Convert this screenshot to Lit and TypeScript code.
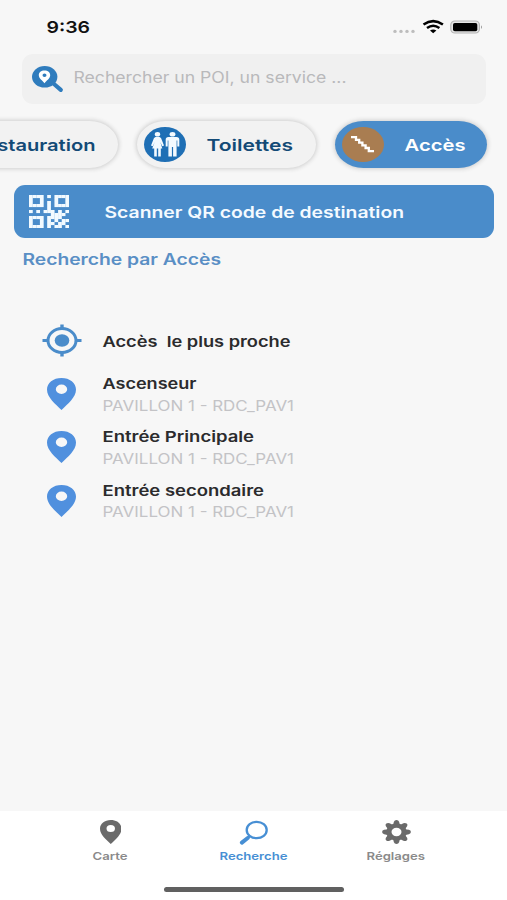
import { LitElement, html, css, svg } from "lit";
import { customElement } from "lit/decorators.js";

const label = (text: string, width: number, size: number, cls = "", baseline = 15) => html`
  <svg class="label ${cls}" width=${width} height="20" viewBox="0 0 ${width} 20">
    <text x="-0.5" y=${baseline} font-size=${size} textLength=${width} lengthAdjust="spacingAndGlyphs">${text}</text>
  </svg>`;

const pin = (w: number, h: number) => html`
  <svg width=${w} height=${h} viewBox="0 0 28 32" preserveAspectRatio="none">
    <path fill="currentColor" fill-rule="evenodd"
      d="M14 0C6 0 0 4.8 0 11.6C0 19.500 8 26 14 32C20 26 28 19.500 28 11.600C28 4.800 22 0 14 0ZM14 6.500A5.500 4.700 0 1 1 14 15.900A5.500 4.700 0 1 1 14 6.500Z"/>
  </svg>`;

const QR = [
  "11110101111",
  "10010001001",
  "10010101001",
  "11110101111",
  "00000100000",
  "10101110101",
  "00000011110",
  "11110111100",
  "10010101011",
  "10010110110",
  "11110101101",
];

const qrIcon = html`
  <svg class="qr" width="40" height="33" viewBox="0 0 11 11" preserveAspectRatio="none">
    ${QR.flatMap((row, y) => [...row].map((c, x) =>
      c === "1" ? svg`<rect x=${x} y=${y} width="1.03" height="1.03" fill="#f2faff"/>` : null))}
  </svg>`;

const searchPin = html`
  <svg width="32" height="27" viewBox="0 0 32 27">
    <path d="M22 18L28.800 23.800" stroke="#2f7cbd" stroke-width="4.200" stroke-linecap="round"/>
    <ellipse cx="12.700" cy="10.800" rx="12.700" ry="10.800" fill="#2f7cbd"/>
    <path fill="#fff" fill-rule="evenodd" d="M12.500 4.500C9 4.500 6.800 6.500 6.800 9.200C6.800 12.300 10.500 14.500 12.500 17.300C14.500 14.500 18.200 12.300 18.200 9.200C18.200 6.500 16 4.500 12.500 4.500ZM12.500 7.500A2 1.800 0 1 1 12.500 11.100A2 1.800 0 1 1 12.500 7.500Z"/>
  </svg>`;

const toilets = html`
  <svg width="42" height="35" viewBox="0 0 42 35">
    <ellipse cx="21" cy="17.500" rx="21" ry="17.500" fill="#1f6fb5"/>
    <g fill="#f4faff">
      <ellipse cx="13.500" cy="7.200" rx="2.700" ry="2.300"/>
      <path d="M11.500 10H15.500L17 11L20 18.500L18.300 19.200L16.300 15L18.300 21.500H16.800V29.500H14.200V21.500H12.800V29.500H10.200V21.500H8.200L10.700 15L8.700 19.200L7 18.500L10 11Z"/>
      <ellipse cx="28.500" cy="7.200" rx="2.900" ry="2.300"/>
      <path d="M24.500 10H32.500Q35.300 10 35.300 12.500V19.500H33.300V13.500H32.600V29.500H29.100V20H27.900V29.500H24.400V13.500H23.700V19.500H21.700V12.500Q21.700 10 24.500 10Z"/>
    </g>
  </svg>`;

const stairs = html`
  <svg width="42" height="35" viewBox="0 0 42 35">
    <ellipse cx="21" cy="17.500" rx="21" ry="17.500" fill="#a97d51"/>
    <path d="M9 10.200H14V12.900H17.200V15.600H20.400V18.300H23.600V21H26.800V24.200H32" fill="none" stroke="#fff" stroke-width="2.300"/>
  </svg>`;

const target = html`
  <svg width="40" height="33" viewBox="0 0 40 33">
    <g fill="none" stroke="#4a8cca">
      <ellipse cx="20" cy="16.500" rx="14" ry="12" stroke-width="3"/>
      <path d="M20 0.500V5.500M20 27.500V32.500" stroke-width="3.400"/>
      <path d="M0.500 16.500H7M33 16.500H39.500" stroke-width="2.900"/>
    </g>
    <ellipse cx="20" cy="16.500" rx="7.300" ry="6.200" fill="#4a8cca"/>
  </svg>`;

const magnifier = html`
  <svg width="29" height="25" viewBox="0 0 29 25">
    <ellipse cx="17.700" cy="10" rx="10" ry="8.200" fill="none" stroke="currentColor" stroke-width="2.300"/>
    <path d="M11 16L8.500 18" stroke="currentColor" stroke-width="2.400"/>
    <path d="M8.700 18L2.900 22.600" stroke="currentColor" stroke-width="4" stroke-linecap="round"/>
  </svg>`;

const gear = html`
  <svg width="29" height="24" viewBox="-14.500 -14.500 29 29" preserveAspectRatio="none">
    ${[0, 45, 90, 135, 180, 225, 270, 315].map((a) =>
      svg`<path d="M-4.500 -8Q-2.700 -10 -2.600 -12.400Q-2 -14.400 0 -14.400Q2 -14.400 2.600 -12.400Q2.700 -10 4.500 -8Z" fill="currentColor" transform="rotate(${a})"/>`)}
    <circle r="7.500" fill="none" stroke="currentColor" stroke-width="5"/>
  </svg>`;

@customElement("app-root")
export class AppRoot extends LitElement {
  static styles = css`
    :host {
      display: flex; flex-direction: column; height: 900px; width: 507px;
      overflow: hidden; background: #f7f7f7; box-sizing: border-box;
      font-family: Inter, "Liberation Sans", sans-serif; color: #2b2b2d;
    }
    svg { display: block; flex: none; }
    .label { overflow: visible; fill: currentColor; font-weight: 600; }
    .regular { font-weight: 400; }
    .status { height: 54px; display: flex; box-sizing: border-box; padding: 18px 23px 0 47px; justify-content: space-between; color: #111; }
    .search {
      height: 50px; margin: 0 21px 0 22px; border-radius: 11px; background: #f0f0f0;
      display: flex; align-items: center; padding-left: 10px; box-sizing: border-box; gap: 10px; color: #b9b9bb;
    }
    .chips { display: flex; justify-content: flex-end; gap: 19px; margin: 17px 20.500px 0 -120px; color: #134a76; }
    .chip {
      height: 47px; box-sizing: border-box; border-radius: 29px / 24px; background: #f2f2f2;
      display: flex; align-items: center; box-shadow: 0 0 4px 1px #cecece;
    }
    .food { width: 178px; justify-content: flex-end; padding-right: 22px; }
    .wc { width: 179px; padding-left: 7px; gap: 21px; }
    .access { width: 152px; padding-left: 7px; gap: 21px; background: #4a8cca; color: #fff; }
    .scan {
      height: 53px; margin: 17px 13px 0 13.500px; border-radius: 11px; background: #4a8cca; color: #f4faff;
      display: flex; align-items: center; padding-left: 15px; gap: 36px;
    }
    .heading { margin: 11px 0 0 22.500px; color: #5a8fc5; }
    .list { margin-top: 45px; padding-left: 41.500px; flex: 1; }
    .row { display: grid; grid-template-columns: 40px 1fr; column-gap: 21px; height: 53.300px; align-items: center; justify-items: start; }
    .row.place { color: #5090de; }
    .row.place > svg { justify-self: center; }
    .name { color: #2b2b2d; }
    .sub { color: #c3c3c6; margin-top: 1.500px; }
    .nav { background: #fff; height: 89px; display: flex; flex-direction: column; align-items: center; }
    .tabs { display: grid; grid-template-columns: repeat(3, 143px); height: 75px; }
    .tab { display: flex; flex-direction: column; align-items: center; color: #6a6a6a; padding-top: 9px; box-sizing: border-box; }
    .tab .glyph { height: 26px; display: flex; align-items: flex-start; }
    .tab .label { color: #8a8a8a; }
    .tab.on, .tab.on .label { color: #478fd4; }
    .home { width: 180px; height: 5px; margin-top: 0.500px; border-radius: 3px; background: #606060; }
    .signals { display: flex; margin-top: 1px; }
  `;

  private place(name: string, width: number) {
    return html`<div class="row place">
      ${pin(29, 32)}
      <div>
        <div class="name">${label(name, width, 14.8, "", 15.800)}</div>
        <div class="sub">${label("PAVILLON 1 - RDC_PAV1", 191.500, 14, "regular", 15.500)}</div>
      </div>
    </div>`;
  }

  render() {
    return html`
      <div class="status">
        ${label("9:36", 43.500, 16.500, "", 15.300)}
        <svg class="signals" width="92" height="16" viewBox="0 0 92 16">
          <g fill="#bdbdbd">
            <circle cx="3" cy="12.400" r="1.700"/><circle cx="9" cy="12.400" r="1.700"/>
            <circle cx="15" cy="12.400" r="1.700"/><circle cx="21" cy="12.400" r="1.700"/>
          </g>
          <g fill="none" stroke="#000" stroke-width="2.500">
            <path d="M31.500 5.500Q41.200 -1.300 50.900 5.500"/>
            <path d="M35 9Q41.200 4.500 47.400 9"/>
          </g>
          <path d="M38 11.500Q41.200 9.300 44.400 11.500L41.200 14.300Z" fill="#000"/>
          <rect x="58.800" y="2" width="28.600" height="12" rx="4" fill="#e6e6e6" stroke="#b4b4b4" stroke-width="1.200"/>
          <rect x="61" y="3.900" width="24.300" height="8.300" rx="1.800" fill="#000"/>
          <path d="M89 6.200Q91 8 89 10Z" fill="#999"/>
        </svg>
      </div>
      <div class="search">${searchPin}${label("Rechercher un POI, un service ...", 273, 15.500, "regular", 13.700)}</div>
      <div class="chips">
        <div class="chip food">${label("Restauration", 123, 16.500, "", 15.500)}</div>
        <div class="chip wc">${toilets}${label("Toilettes", 86.500, 16.500, "", 15.500)}</div>
        <div class="chip access">${stairs}${label("Accès", 61, 16.500, "", 15.500)}</div>
      </div>
      <div class="scan">${qrIcon}${label("Scanner QR code de destination", 299.500, 16, "", 15.800)}</div>
      <div class="heading">${label("Recherche par Accès", 198.500, 15.500, "", 15.600)}</div>
      <div class="list">
        <div class="row">${target}<div class="name">${label("Accès\u00a0 le plus proche", 188, 14.800, "", 15.500)}</div></div>
        ${this.place("Ascenseur", 94)}
        ${this.place("Entrée Principale", 151.500)}
        ${this.place("Entrée secondaire", 161.500)}
      </div>
      <div class="nav">
        <div class="tabs">
          <div class="tab"><div class="glyph">${pin(21.500, 24)}</div>${label("Carte", 35, 11, "", 14)}</div>
          <div class="tab on"><div class="glyph">${magnifier}</div>${label("Recherche", 68, 11, "", 14)}</div>
          <div class="tab"><div class="glyph">${gear}</div>${label("Réglages", 58.500, 11, "", 14)}</div>
        </div>
        <div class="home"></div>
      </div>`;
  }
}
